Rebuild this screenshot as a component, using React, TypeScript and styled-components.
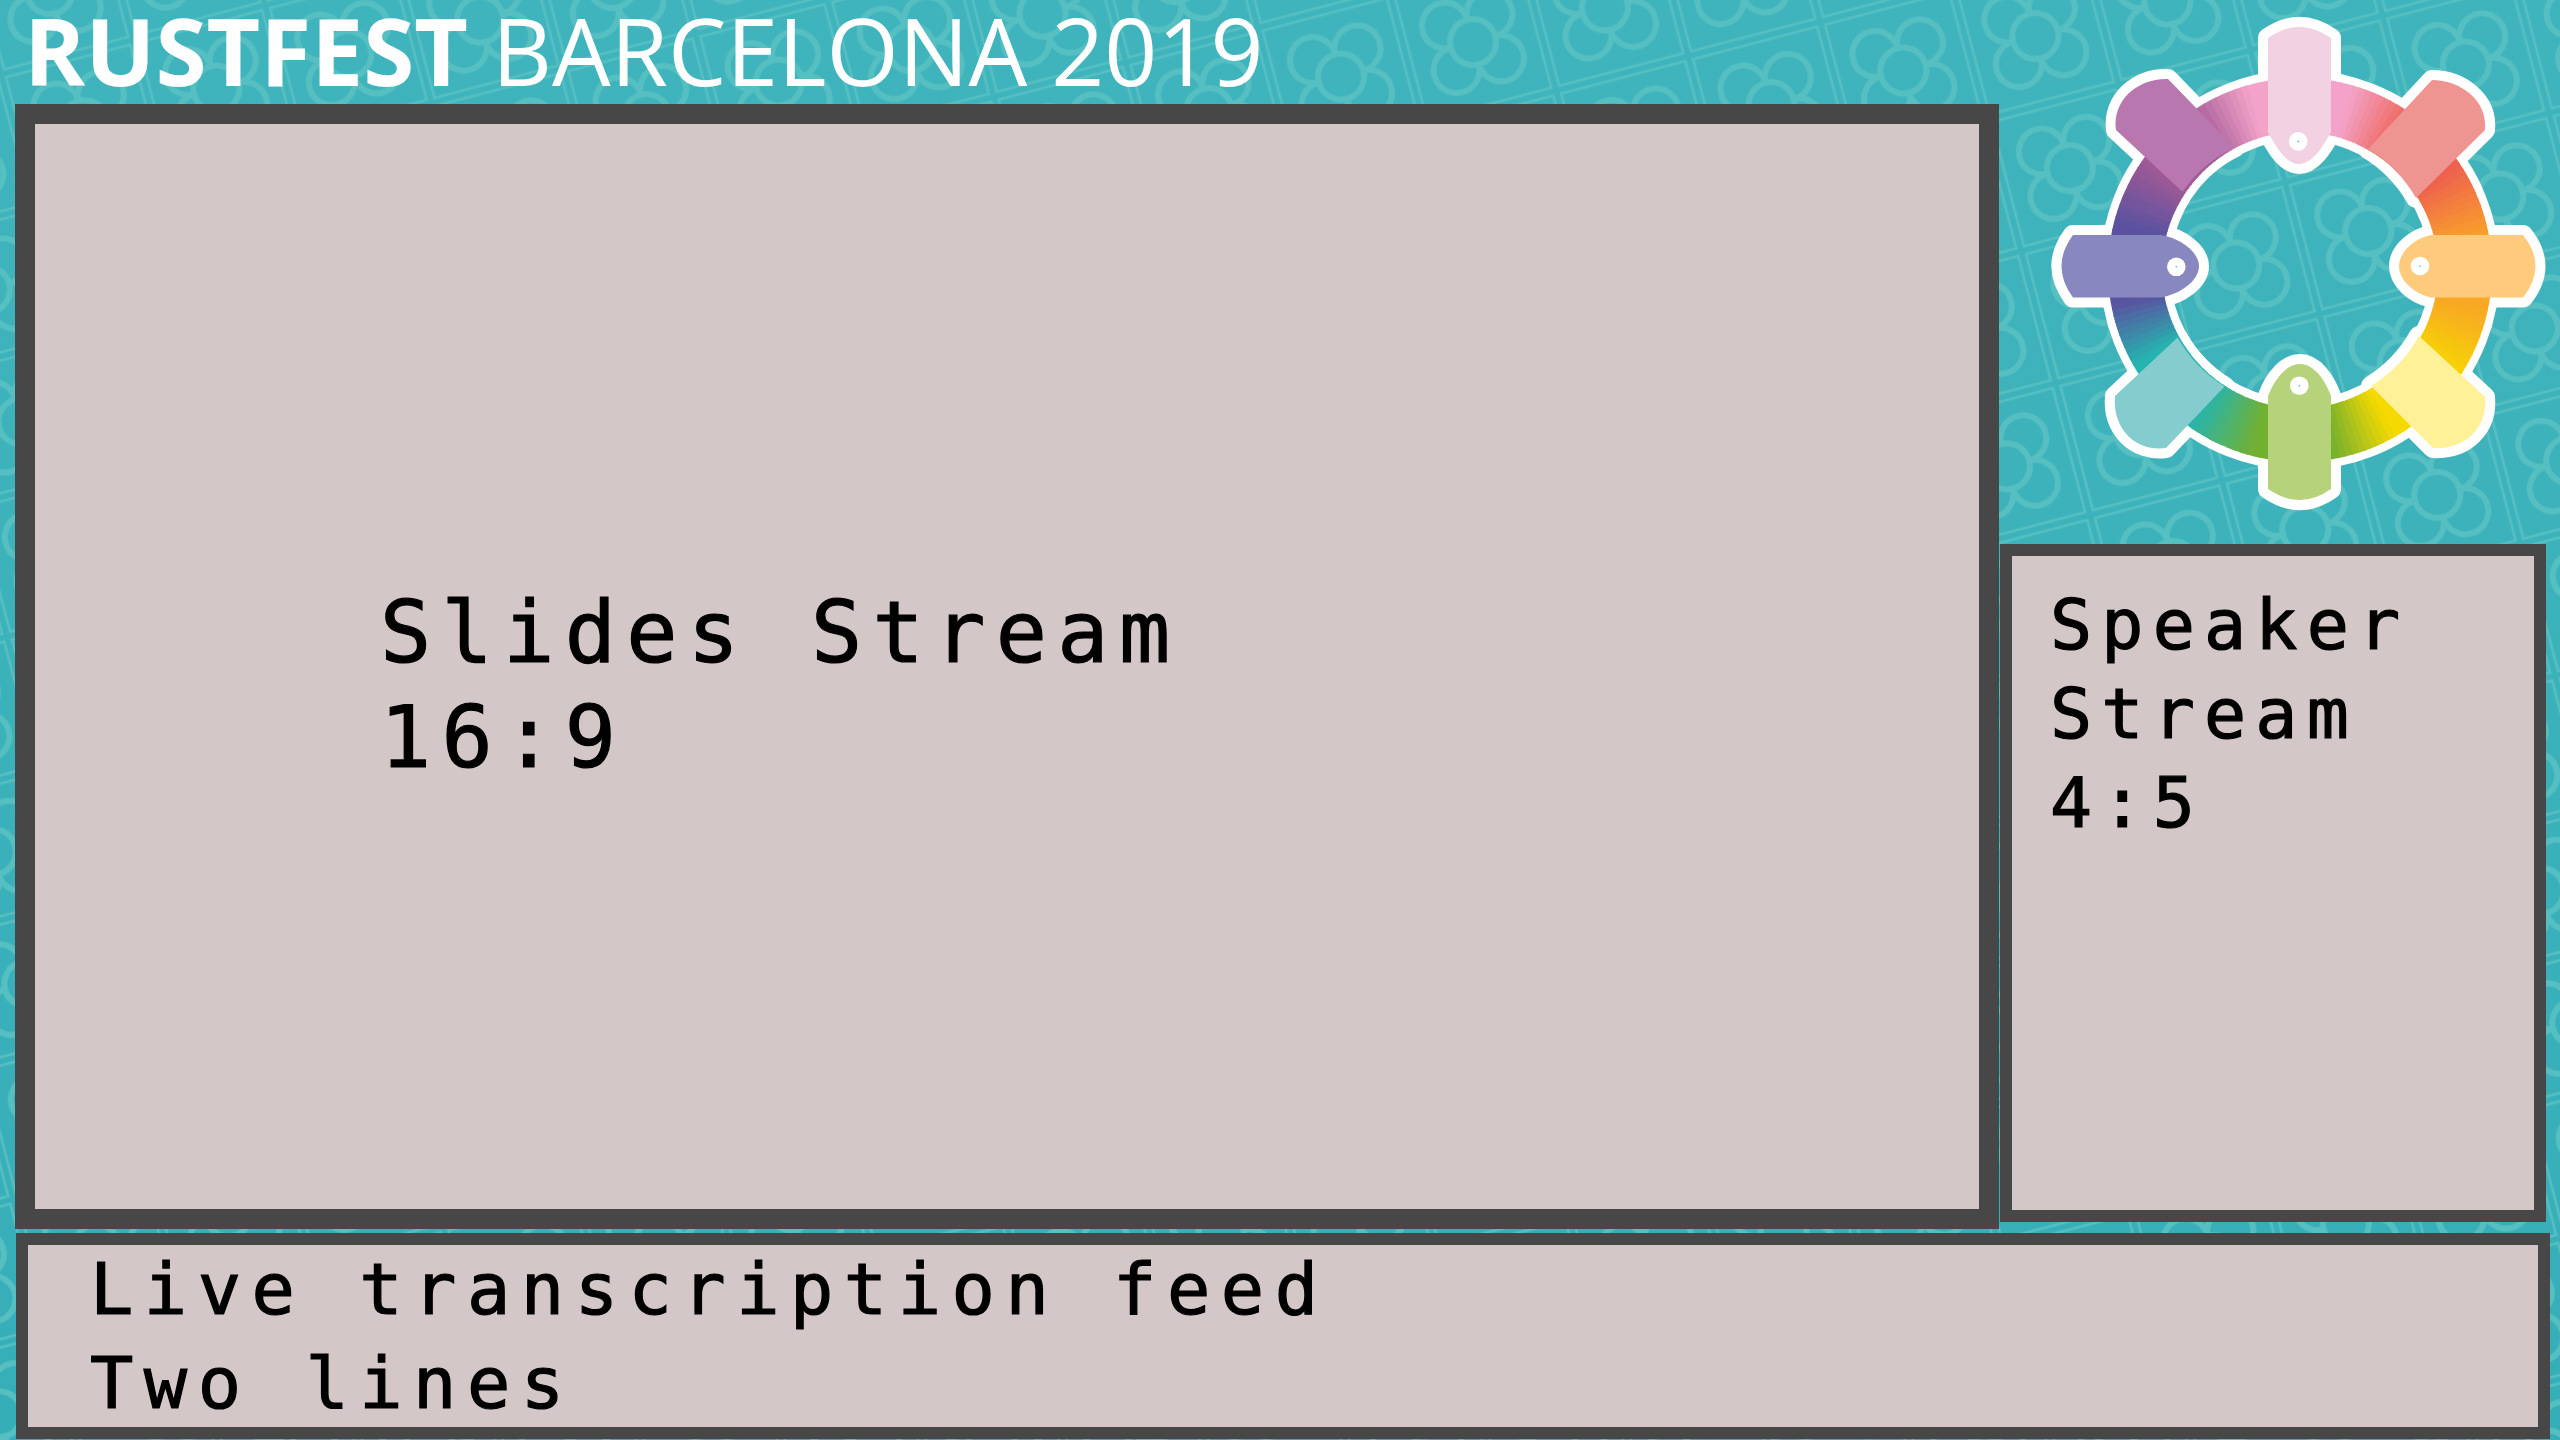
import React from "react";
import styled, { createGlobalStyle } from "styled-components";

const GlobalStyle = createGlobalStyle`
  html, body {
    margin: 0;
    padding: 0;
    background: #3ab1ba;
  }
`;

const Page = styled.div`
  position: relative;
  width: 2560px;
  height: 1440px;
  overflow: hidden;
`;

const Backdrop = styled.svg`
  position: absolute;
  top: 0;
  left: 0;
  width: 2560px;
  height: 1440px;
`;

const Content = styled.div`
  position: relative;
  display: flex;
  flex-direction: column;
`;

const TopRow = styled.div`
  display: flex;
  align-items: flex-start;
  height: 1229px;
  padding-left: 15px;
`;

const LeftColumn = styled.div`
  width: 1984px;
  flex: none;
`;

const RightColumn = styled.div`
  width: 560px;
  flex: none;
  margin-left: 1px;
`;

const Header = styled.h1`
  height: 104px;
  margin: 0;
  padding-left: 9px;
  box-sizing: border-box;
  color: #fff;
  font-family: "Open Sans", sans-serif;
  font-size: 92.8px;
  font-weight: 400;
  line-height: 100px;
  white-space: nowrap;
`;

const Strong = styled.b`
  font-weight: 700;
`;

const Frame = styled.div<{ $width: number; $height: number; $border: number }>`
  box-sizing: border-box;
  width: ${(p) => p.$width}px;
  height: ${(p) => p.$height}px;
  border: ${(p) => p.$border}px solid #474747;
  background: #d3c7c7;
  color: #000;
  font-family: "DejaVu Sans Mono", monospace;
  -webkit-text-stroke: 1.2px #000;
`;

const SlidesFrame = styled(Frame)`
  padding: 456px 0 0 345px;
`;

const SpeakerFrame = styled(Frame)`
  padding: 25px 0 0 38px;
`;

const FeedFrame = styled(Frame)`
  display: flex;
  flex-direction: column;
  justify-content: center;
  margin: 4px 0 0 16px;
  padding-left: 62px;
`;

const Label = styled.div<{ $size: number; $line: number; $spacing: number }>`
  font-size: ${(p) => p.$size}px;
  line-height: ${(p) => p.$line}px;
  letter-spacing: ${(p) => p.$spacing}px;
  white-space: nowrap;
`;

const LogoSlot = styled.svg`
  display: block;
  width: 540px;
  height: 544px;
  margin-left: 20px;
`;

const TILE = 136.4;

const Backgound = () => (
  <Backdrop viewBox="0 0 2560 1440">
    <defs>
      <linearGradient id="sea" x1="0" y1="0" x2="0" y2="1">
        <stop offset="0" stopColor="#40b4bc" />
        <stop offset="1" stopColor="#36aeb8" />
      </linearGradient>
      <pattern
        id="tiles"
        patternUnits="userSpaceOnUse"
        width={TILE}
        height={TILE}
        patternTransform={`translate(1473 42) rotate(-14.65) translate(${-TILE / 2} ${-TILE / 2})`}
      >
        <g fill="none" stroke="#55bfc2">
          <rect x="4" y="4" width={TILE - 8} height={TILE - 8} strokeWidth="2.6" />
          <g transform={`translate(${TILE / 2} ${TILE / 2})`} strokeWidth="6">
            <circle r="23" />
            <path d="M23 0A23 23 0 1 1 0 23" />
            <path d="M0 23A23 23 0 1 1 -23 0" />
            <path d="M-23 0A23 23 0 1 1 0 -23" />
            <path d="M0 -23A23 23 0 1 1 23 0" />
          </g>
        </g>
      </pattern>
    </defs>
    <rect width="2560" height="1440" fill="url(#sea)" />
    <rect width="2560" height="1440" fill="url(#tiles)" />
  </Backdrop>
);

// colour stops round the wheel, clockwise from 12 o'clock
const WHEEL: [number, number[]][] = [
  [0, [243, 163, 201]],
  [16, [243, 163, 201]],
  [37, [238, 96, 80]],
  [56, [238, 96, 80]],
  [82, [249, 168, 37]],
  [102, [249, 168, 37]],
  [126, [246, 217, 0]],
  [150, [246, 217, 0]],
  [170, [114, 176, 47]],
  [194, [114, 176, 47]],
  [216, [37, 181, 176]],
  [240, [37, 181, 176]],
  [260, [90, 82, 160]],
  [284, [90, 82, 160]],
  [306, [162, 90, 150]],
  [324, [162, 90, 150]],
  [344, [243, 163, 201]],
  [360, [243, 163, 201]],
];

const colorAt = (deg: number) => {
  let i = 0;
  while (i < WHEEL.length - 2 && WHEEL[i + 1][0] <= deg) i++;
  const [a, ca] = WHEEL[i];
  const [b, cb] = WHEEL[i + 1];
  const t = (deg - a) / (b - a);
  const mix = ca.map((v, n) => Math.round(v + (cb[n] - v) * t));
  return `rgb(${mix.join(",")})`;
};

const CX = 280;
const CY = 270;
const RING = 165;

const point = (deg: number) => {
  const rad = (deg * Math.PI) / 180;
  return `${CX + RING * Math.sin(rad)} ${CY - RING * Math.cos(rad)}`;
};

const segments = Array.from({ length: 180 }, (_, i) => i * 2);

const ARMS = [
  { fill: "#f2d1e2", d: "M248 38Q279 16 311 38V132C303 147 292 164 279 164C266 164 256 147 248 132Z" },
  { fill: "#ee9491", d: "M412 80C440 80 468 100 465 130L396 198A138 138 0 0 0 348 149Z" },
  { fill: "#fecb7d", d: "M411 235H503Q528 266 503 297.5H411C395 294 379 281 379 266C379 252 395 238 411 235Z" },
  { fill: "#fff197", d: "M399 336L465 397C468 428 445 450 413 448L351 386A138 138 0 0 0 399 336Z" },
  { fill: "#b6d37b", d: "M248 396C254 380 266 364 280 364C294 364 305 380 311 396V489Q280 511 248 489Z" },
  { fill: "#85ccce", d: "M95 396L157.6 337.6A138 138 0 0 0 204.6 386.5L146 448C115 452 92 428 95 396Z" },
  { fill: "#8987c0", d: "M53 235H141C160 238 179 252 179 266C179 281 160 294 141 297.5H53Q30 266 53 235Z" },
  { fill: "#b877ae", d: "M148 79L214.4 147.6A138 138 0 0 0 162.5 191.7L96 130C92 100 118 78 148 79Z" },
];

const PINS = [
  [278.2, 141.4],
  [400, 266],
  [279.3, 385.7],
  [156.3, 266.8],
];

const Logo = () => (
  <LogoSlot viewBox="0 0 540 544">
    <circle cx={CX} cy={CY} r={RING} fill="none" stroke="#fff" strokeWidth="70" />
    {ARMS.map((arm) => (
      <path key={arm.fill} d={arm.d} fill="#fff" stroke="#fff" strokeWidth="20" strokeLinejoin="round" />
    ))}
    {segments.map((deg) => (
      <path
        key={deg}
        d={`M${point(deg)}A${RING} ${RING} 0 0 1 ${point(deg + 2.4)}`}
        fill="none"
        stroke={colorAt(deg + 1)}
        strokeWidth="54"
      />
    ))}
    {ARMS.map((arm) => (
      <path key={arm.fill} d={arm.d} fill={arm.fill} />
    ))}
    {PINS.map(([x, y]) => (
      <g key={x}>
        <circle cx={x} cy={y} r="9.3" fill="#fff" />
        <circle cx={x} cy={y} r="0.8" fill="#3ab1ba" />
      </g>
    ))}
  </LogoSlot>
);

export default function App() {
  return (
    <Page>
      <GlobalStyle />
      <Backgound />
      <Content>
        <TopRow>
          <LeftColumn>
            <Header>
              <Strong>RUSTFEST</Strong> BARCELONA 2019
            </Header>
            <SlidesFrame $width={1984} $height={1125} $border={20}>
              <Label $size={85} $line={105} $spacing={10.4}>Slides Stream</Label>
              <Label $size={85} $line={105} $spacing={10.4}>16:9</Label>
            </SlidesFrame>
          </LeftColumn>
          <RightColumn>
            <Logo />
            <SpeakerFrame $width={546} $height={678} $border={12}>
              <Label $size={70} $line={89} $spacing={9.2}>Speaker</Label>
              <Label $size={70} $line={89} $spacing={9.2}>Stream</Label>
              <Label $size={70} $line={89} $spacing={9.2}>4:5</Label>
            </SpeakerFrame>
          </RightColumn>
        </TopRow>
        <FeedFrame $width={2534} $height={206} $border={12}>
          <Label $size={72} $line={94} $spacing={10.5}>Live transcription feed</Label>
          <Label $size={72} $line={94} $spacing={10.5}>Two lines</Label>
        </FeedFrame>
      </Content>
    </Page>
  );
}
